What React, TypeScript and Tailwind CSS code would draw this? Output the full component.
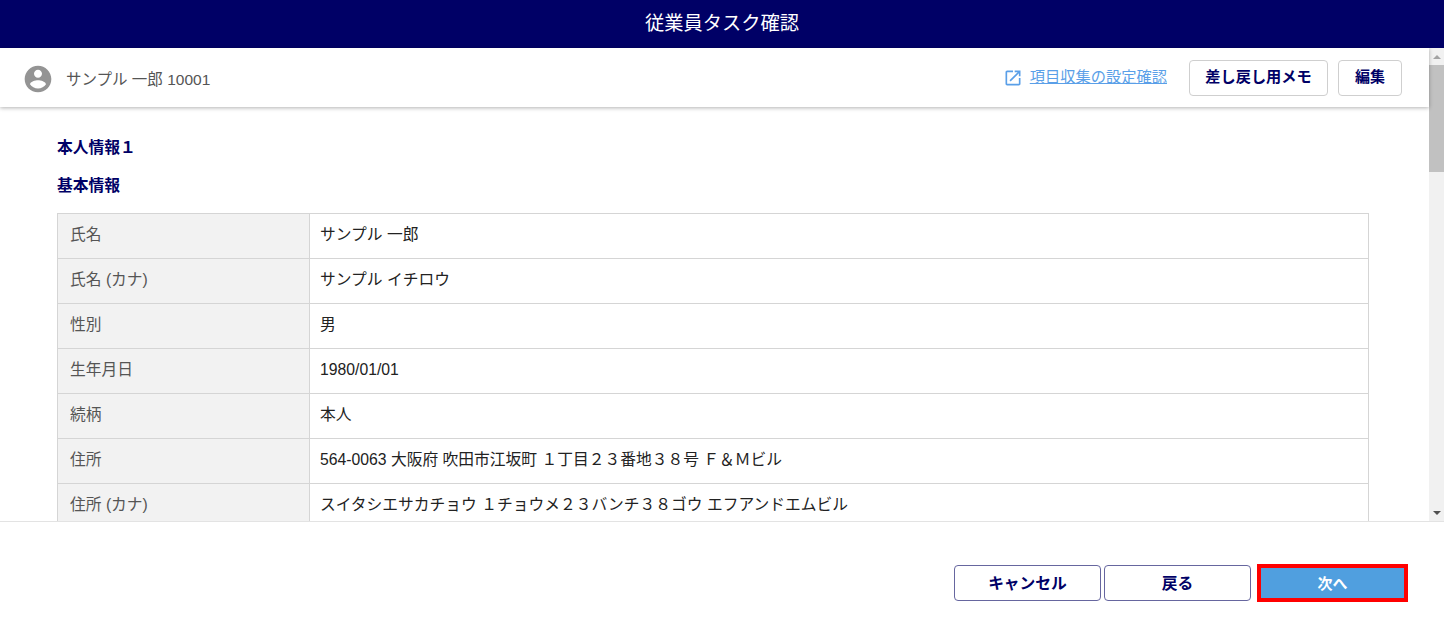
import React from 'react';

const FONT = "font-['Liberation_Sans','Noto_Sans_CJK_JP',sans-serif]";

const ROWS = [
  { label: '氏名', value: 'サンプル 一郎' },
  { label: '氏名 (カナ)', value: 'サンプル イチロウ' },
  { label: '性別', value: '男' },
  { label: '生年月日', value: '1980/01/01' },
  { label: '続柄', value: '本人' },
  { label: '住所', value: '564-0063 大阪府 吹田市江坂町 １丁目２３番地３８号 Ｆ＆Ｍビル' },
  { label: '住所 (カナ)', value: 'スイタシエサカチョウ １チョウメ２３バンチ３８ゴウ エフアンドエムビル' },
];

const App: React.FC = () => {
  return (
    <div className={`${FONT} w-[1444px] h-[636px] flex flex-col bg-white overflow-hidden`}>
      {/* ヘッダー */}
      <div className="h-12 shrink-0 bg-[#000066] flex items-center justify-center">
        <h1 className="text-[19.25px] font-normal text-white">従業員タスク確認</h1>
      </div>

      <div className="h-[473px] shrink-0 flex">
        <div className="flex-1 min-w-0 flex flex-col">
          {/* 対象者バー */}
          <div className="relative z-10 h-[59px] shrink-0 pl-6 pr-[27px] flex items-center justify-between bg-white shadow-[0_1px_4px_rgba(0,0,0,0.3)]">
            <div className="flex items-center">
              <svg width="32" height="32" viewBox="0 0 24 24" className="-ml-[2px] mt-[3px] fill-[#949494]">
                <path d="M12 2C6.48 2 2 6.48 2 12s4.48 10 10 10 10-4.48 10-10S17.52 2 12 2zm0 3c1.66 0 3 1.34 3 3s-1.34 3-3 3-3-1.34-3-3 1.34-3 3-3zm0 14.2c-2.5 0-4.71-1.28-6-3.22.03-1.99 4-3.08 6-3.08 1.99 0 5.97 1.09 6 3.08-1.29 1.94-3.5 3.22-6 3.22z" />
              </svg>
              <span className="ml-[12px] pt-[5px] text-[15.5px] text-[#555555]">サンプル 一郎 10001</span>
            </div>
            <div className="flex items-center">
              <svg width="20" height="20" viewBox="0 0 24 24" className="fill-[#5a9fe8]">
                <path d="M19 19H5V5h7V3H5c-1.11 0-2 .9-2 2v14c0 1.1.89 2 2 2h14c1.1 0 2-.9 2-2v-7h-2v7zM14 3v2h3.59l-9.83 9.83 1.41 1.41L19 6.41V10h2V3h-7z" />
              </svg>
              <a className="ml-[7px] text-[15.25px] text-[#5a9fe8] underline">項目収集の設定確認</a>
              <button className="ml-[22px] w-[139px] h-9 bg-white border border-[#cfcfcf] rounded text-[15.2px] font-bold text-[#000066]">差し戻し用メモ</button>
              <button className="ml-[10px] w-[64px] h-9 bg-white border border-[#cfcfcf] rounded text-[15px] font-bold text-[#000066]">編集</button>
            </div>
          </div>

          {/* 本文 */}
          <div className="flex-1 min-h-0 overflow-hidden pl-[57px] pr-[60px] pt-[31px]">
            <h2 className="text-[15.75px] leading-5 font-bold text-[#000066]">本人情報１</h2>
            <h3 className="mt-[18px] text-[15.75px] leading-5 font-bold text-[#000066]">基本情報</h3>
            <table className="mt-[17px] w-[1312px] table-fixed border-collapse">
              <tbody>
                {ROWS.map((row) => (
                  <tr key={row.label} className="h-[45px]">
                    <td className="w-[252px] px-[12px] pb-[2px] border border-[#d5d5d5] bg-[#f2f2f2] text-[15.75px] text-[#555555]">{row.label}</td>
                    <td className="px-[10px] pb-[2px] border border-[#d5d5d5] text-[15.75px] text-[#222222]">{row.value}</td>
                  </tr>
                ))}
              </tbody>
            </table>
          </div>
        </div>

        {/* スクロールバー */}
        <div className="w-[15px] shrink-0 bg-[#f1f1f1] flex flex-col">
          <div className="h-[17px] flex items-center justify-center">
            <div className="w-0 h-0 border-x-[4px] border-x-transparent border-b-[4px] border-b-[#a3a3a3]" />
          </div>
          <div className="h-[107px] bg-[#c1c1c1]" />
          <div className="flex-1" />
          <div className="h-[17px] flex items-center justify-center">
            <div className="w-0 h-0 border-x-[4px] border-x-transparent border-t-[4px] border-t-[#505050]" />
          </div>
        </div>
      </div>

      {/* フッター */}
      <div className="flex-1 border-t border-[#e3e3e3] pt-[43px] pr-[36px] flex justify-end items-start">
        <button className="w-[147px] h-9 mr-[3px] pt-[2px] bg-white border border-[#66669f] rounded text-[15.75px] font-bold text-[#000066]">キャンセル</button>
        <button className="w-[147px] h-9 mr-[6px] pt-[2px] bg-white border border-[#66669f] rounded text-[15.75px] font-bold text-[#000066]">戻る</button>
        <button className="w-[151px] h-[38px] -mt-[1px] pt-[2px] bg-[#509fdf] border-[4px] border-[#ff0000] text-[15px] font-bold text-white">次へ</button>
      </div>
    </div>
  );
};

export default App;
